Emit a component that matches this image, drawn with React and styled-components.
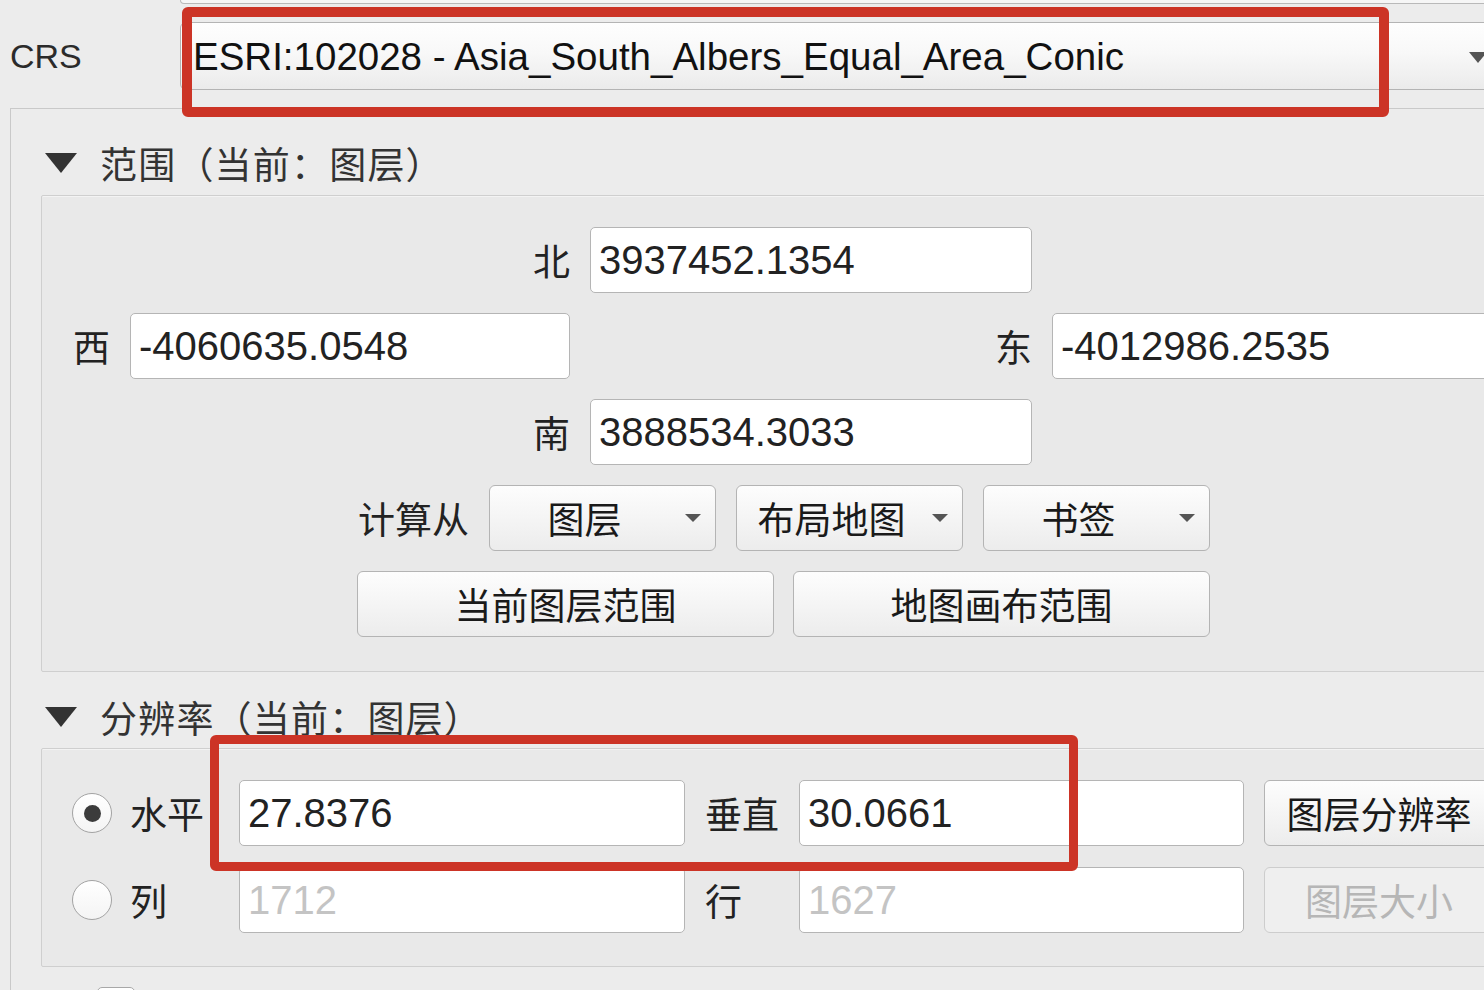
import React from "react";
import styled, { createGlobalStyle } from "styled-components";

const Global = createGlobalStyle`
  html, body { margin: 0; padding: 0; background: #ececec; }
  body {
    font-family: "Liberation Sans", "Noto Sans CJK SC", sans-serif;
    color: #222;
    overflow: hidden;
  }
  * { box-sizing: border-box; }
`;

const Page = styled.div`
  position: relative;
  width: 1484px;
  height: 990px;
  overflow: hidden;
  background: #ececec;
`;

const PrevWidgetEdge = styled.div`
  margin-left: 180px;
  width: 1400px;
  height: 4px;
  border: 1px solid #b9b9b9;
  border-top: none;
  border-radius: 0 0 0 4px;
  background: #f6f6f6;
`;

const CrsRow = styled.div`
  display: flex;
  align-items: center;
  height: 68px;
  margin-top: 18px;
`;

const CrsLabel = styled.div`
  flex: 0 0 180px;
  padding-left: 10px;
  font-size: 34px;
  color: #2b2b2b;
`;

const Combo = styled.div`
  flex: 0 0 1320px;
  height: 68px;
  display: flex;
  align-items: center;
  padding: 2px 12px 0 12px;
  border: 1.5px solid #b4b4b4;
  border-radius: 6px;
  background: linear-gradient(#fefefe, #f8f8f8 45%, #ebebeb);
  font-size: 38.5px;
  color: #111;
`;

const ComboText = styled.span`
  flex: 1;
  white-space: nowrap;
`;

const ComboArrow = styled.span`
  width: 0;
  height: 0;
  border-left: 9px solid transparent;
  border-right: 9px solid transparent;
  border-top: 11px solid #555;
`;

const Frame = styled.div`
  margin: 18px 0 0 10px;
  width: 1560px;
  height: 900px;
  border: 1px solid #c9c9c9;
  border-right: none;
  border-bottom: none;
  padding: 32px 0 0 30px;
`;

const SectionHeader = styled.div`
  display: flex;
  align-items: center;
  height: 44px;
  margin: ${(p) => (p.$second ? "23px 0 9px" : "0 0 10px")};
  font-size: 37px;
  letter-spacing: 1.2px;
  color: #333;
`;

const Caret = styled.span`
  width: 0;
  height: 0;
  margin: 0 23px 0 4px;
  border-left: 16px solid transparent;
  border-right: 16px solid transparent;
  border-top: 20px solid #333;
`;

const GroupBox = styled.div`
  width: 1485px;
  border: 1px solid #cfcfcf;
  border-radius: 2px;
  background: #e9e9e9;
  box-shadow: inset 0 1px 0 #f3f3f3;
`;

const ExtentBox = styled(GroupBox)`
  display: flex;
  flex-direction: column;
  gap: 20px;
  padding: 31px 0 34px 0;
`;

const ExtentGrid = styled.div`
  display: grid;
  grid-template-columns: 68px 440px 442px 442px;
  grid-auto-rows: 66px;
  column-gap: 20px;
  row-gap: 20px;
  align-items: center;
`;

const Label = styled.div`
  font-size: 37px;
  white-space: nowrap;
  justify-self: ${(p) => (p.$end ? "end" : "start")};
  grid-column: ${(p) => p.$col || "auto"};
  color: #222;
`;

const Field = styled.input`
  grid-column: ${(p) => p.$col || "auto"};
  width: 100%;
  height: 66px;
  padding: 0 8px;
  border: 1.5px solid #b5b5b5;
  border-radius: 5px;
  background: #fff;
  font-family: "Liberation Sans", sans-serif;
  font-size: 40px;
  color: #222;
  outline: none;
  &::placeholder {
    color: #c4c4c4;
  }
`;

const CalcRow = styled.div`
  display: flex;
  align-items: center;
  gap: 20px;
  height: 66px;
  margin-left: 316px;
`;

const ButtonRow = styled.div`
  display: flex;
  gap: 19px;
  height: 66px;
  margin-left: 315px;
`;

const PushButton = styled.button`
  width: ${(p) => p.$w}px;
  height: 66px;
  padding: 0;
  border: 1.5px solid ${(p) => (p.disabled ? "#cdcdcd" : "#b4b4b4")};
  border-radius: 6px;
  background: ${(p) =>
    p.disabled ? "#efefef" : "linear-gradient(#fdfdfd, #f3f3f3 60%, #ececec)"};
  font-family: "Liberation Sans", "Noto Sans CJK SC", sans-serif;
  font-size: 37px;
  color: ${(p) => (p.disabled ? "#b6b6b6" : "#1a1a1a")};
  white-space: nowrap;
  grid-column: ${(p) => p.$col || "auto"};
`;

const DropButton = styled(PushButton)`
  display: flex;
  align-items: center;
  padding-right: 14px;
`;

const DropText = styled.span`
  flex: 1;
  text-align: center;
`;

const SmallArrow = styled.span`
  margin-left: 6px;
  width: 0;
  height: 0;
  border-left: 8px solid transparent;
  border-right: 8px solid transparent;
  border-top: 8px solid #555;
`;

const ResolutionBox = styled(GroupBox)`
  display: grid;
  grid-template-columns: 38px 89px 446px 74px 445px 230px;
  grid-auto-rows: 66px;
  column-gap: 20px;
  row-gap: 21px;
  align-items: center;
  padding: 31px 0 33px 30px;
`;

const Radio = styled.span`
  width: 40px;
  height: 40px;
  border-radius: 50%;
  border: 1.5px solid #a3a3a3;
  background: linear-gradient(#ffffff, #f4f4f4);
  display: flex;
  align-items: center;
  justify-content: center;
  &::after {
    content: "";
    display: ${(p) => (p.$checked ? "block" : "none")};
    width: 17px;
    height: 17px;
    border-radius: 50%;
    background: #3b3b3b;
  }
`;

const Checkbox = styled.div`
  margin: 20px 0 0 56px;
  width: 38px;
  height: 38px;
  border: 1.5px solid #a8a8a8;
  border-radius: 5px;
  background: #fff;
`;

const Highlight = styled.div`
  position: absolute;
  left: ${(p) => p.$left}px;
  top: ${(p) => p.$top}px;
  width: ${(p) => p.$w}px;
  height: ${(p) => p.$h}px;
  border: ${(p) => p.$t}px solid #cc3426;
  border-radius: 6px;
  pointer-events: none;
`;

export default function App() {
  return (
    <Page>
      <Global />
      <PrevWidgetEdge />
      <CrsRow>
        <CrsLabel>CRS</CrsLabel>
        <Combo>
          <ComboText>ESRI:102028 - Asia_South_Albers_Equal_Area_Conic</ComboText>
          <ComboArrow />
        </Combo>
      </CrsRow>

      <Frame>
        <SectionHeader>
          <Caret />
          范围（当前：图层）
        </SectionHeader>
        <ExtentBox>
          <ExtentGrid>
            <Label $col="2" $end>北</Label>
            <Field $col="3" readOnly defaultValue="3937452.1354" />

            <Label $col="1" $end>西</Label>
            <Field $col="2" readOnly defaultValue="-4060635.0548" />
            <Label $col="3" $end>东</Label>
            <Field $col="4" readOnly defaultValue="-4012986.2535" />

            <Label $col="2" $end>南</Label>
            <Field $col="3" readOnly defaultValue="3888534.3033" />
          </ExtentGrid>

          <CalcRow>
            <Label>计算从</Label>
            <DropButton $w={227}>
              <DropText>图层</DropText>
              <SmallArrow />
            </DropButton>
            <DropButton $w={227}>
              <DropText>布局地图</DropText>
              <SmallArrow />
            </DropButton>
            <DropButton $w={227}>
              <DropText>书签</DropText>
              <SmallArrow />
            </DropButton>
          </CalcRow>

          <ButtonRow>
            <PushButton $w={417}>当前图层范围</PushButton>
            <PushButton $w={417}>地图画布范围</PushButton>
          </ButtonRow>
        </ExtentBox>

        <SectionHeader $second>
          <Caret />
          分辨率（当前：图层）
        </SectionHeader>
        <ResolutionBox>
          <Radio $checked />
          <Label>水平</Label>
          <Field readOnly defaultValue="27.8376" />
          <Label>垂直</Label>
          <Field readOnly defaultValue="30.0661" />
          <PushButton $w={230}>图层分辨率</PushButton>

          <Radio />
          <Label>列</Label>
          <Field readOnly placeholder="1712" />
          <Label>行</Label>
          <Field readOnly placeholder="1627" />
          <PushButton $w={230} disabled>
            图层大小
          </PushButton>
        </ResolutionBox>
        <Checkbox />
      </Frame>

      <Highlight $left={182} $top={7} $w={1207} $h={110} $t={10} />
      <Highlight $left={210} $top={735} $w={868} $h={136} $t={9} />
    </Page>
  );
}
